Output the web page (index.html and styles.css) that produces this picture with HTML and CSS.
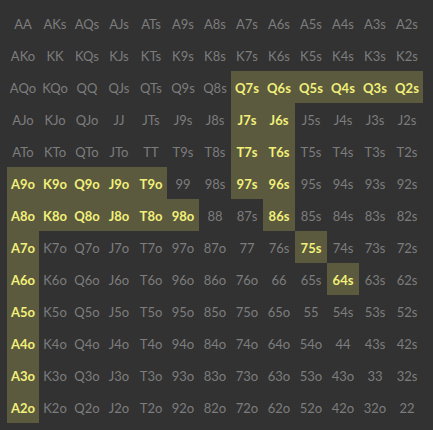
FILE: index.html
```html
<!DOCTYPE html>
<html>
<head>
<meta charset="utf-8">
<link rel="stylesheet" href="styles.css">
</head>
<body>
<div class="grid">
<div class="c">AA</div><div class="c">AKs</div><div class="c">AQs</div><div class="c">AJs</div><div class="c">ATs</div><div class="c">A9s</div><div class="c">A8s</div><div class="c">A7s</div><div class="c">A6s</div><div class="c">A5s</div><div class="c">A4s</div><div class="c">A3s</div><div class="c">A2s</div>
<div class="c">AKo</div><div class="c">KK</div><div class="c">KQs</div><div class="c">KJs</div><div class="c">KTs</div><div class="c">K9s</div><div class="c">K8s</div><div class="c">K7s</div><div class="c">K6s</div><div class="c">K5s</div><div class="c">K4s</div><div class="c">K3s</div><div class="c">K2s</div>
<div class="c">AQo</div><div class="c">KQo</div><div class="c">QQ</div><div class="c">QJs</div><div class="c">QTs</div><div class="c">Q9s</div><div class="c">Q8s</div><div class="c on">Q7s</div><div class="c on">Q6s</div><div class="c on">Q5s</div><div class="c on">Q4s</div><div class="c on">Q3s</div><div class="c on">Q2s</div>
<div class="c">AJo</div><div class="c">KJo</div><div class="c">QJo</div><div class="c">JJ</div><div class="c">JTs</div><div class="c">J9s</div><div class="c">J8s</div><div class="c on">J7s</div><div class="c on">J6s</div><div class="c">J5s</div><div class="c">J4s</div><div class="c">J3s</div><div class="c">J2s</div>
<div class="c">ATo</div><div class="c">KTo</div><div class="c">QTo</div><div class="c">JTo</div><div class="c">TT</div><div class="c">T9s</div><div class="c">T8s</div><div class="c on">T7s</div><div class="c on">T6s</div><div class="c">T5s</div><div class="c">T4s</div><div class="c">T3s</div><div class="c">T2s</div>
<div class="c on">A9o</div><div class="c on">K9o</div><div class="c on">Q9o</div><div class="c on">J9o</div><div class="c on">T9o</div><div class="c">99</div><div class="c">98s</div><div class="c on">97s</div><div class="c on">96s</div><div class="c">95s</div><div class="c">94s</div><div class="c">93s</div><div class="c">92s</div>
<div class="c on">A8o</div><div class="c on">K8o</div><div class="c on">Q8o</div><div class="c on">J8o</div><div class="c on">T8o</div><div class="c on">98o</div><div class="c">88</div><div class="c">87s</div><div class="c on">86s</div><div class="c">85s</div><div class="c">84s</div><div class="c">83s</div><div class="c">82s</div>
<div class="c on">A7o</div><div class="c">K7o</div><div class="c">Q7o</div><div class="c">J7o</div><div class="c">T7o</div><div class="c">97o</div><div class="c">87o</div><div class="c">77</div><div class="c">76s</div><div class="c on">75s</div><div class="c">74s</div><div class="c">73s</div><div class="c">72s</div>
<div class="c on">A6o</div><div class="c">K6o</div><div class="c">Q6o</div><div class="c">J6o</div><div class="c">T6o</div><div class="c">96o</div><div class="c">86o</div><div class="c">76o</div><div class="c">66</div><div class="c">65s</div><div class="c on">64s</div><div class="c">63s</div><div class="c">62s</div>
<div class="c on">A5o</div><div class="c">K5o</div><div class="c">Q5o</div><div class="c">J5o</div><div class="c">T5o</div><div class="c">95o</div><div class="c">85o</div><div class="c">75o</div><div class="c">65o</div><div class="c">55</div><div class="c">54s</div><div class="c">53s</div><div class="c">52s</div>
<div class="c on">A4o</div><div class="c">K4o</div><div class="c">Q4o</div><div class="c">J4o</div><div class="c">T4o</div><div class="c">94o</div><div class="c">84o</div><div class="c">74o</div><div class="c">64o</div><div class="c">54o</div><div class="c">44</div><div class="c">43s</div><div class="c">42s</div>
<div class="c on">A3o</div><div class="c">K3o</div><div class="c">Q3o</div><div class="c">J3o</div><div class="c">T3o</div><div class="c">93o</div><div class="c">83o</div><div class="c">73o</div><div class="c">63o</div><div class="c">53o</div><div class="c">43o</div><div class="c">33</div><div class="c">32s</div>
<div class="c on">A2o</div><div class="c">K2o</div><div class="c">Q2o</div><div class="c">J2o</div><div class="c">T2o</div><div class="c">92o</div><div class="c">82o</div><div class="c">72o</div><div class="c">62o</div><div class="c">52o</div><div class="c">42o</div><div class="c">32o</div><div class="c">22</div>
</div>
</body>
</html>
```
FILE: styles.css
```css
html, body {
  margin: 0;
  padding: 0;
  background: #323232;
}
body {
  padding: 7px;
  font-family: Lato, "Noto Sans", sans-serif;
  font-size: 13px;
}
.grid {
  display: grid;
  grid-template-columns: repeat(13, 32px);
  grid-auto-rows: 32px;
}
.c {
  display: flex;
  align-items: center;
  justify-content: center;
  padding-top: 2px;
  box-sizing: border-box;
  color: #7d7d7d;
  white-space: nowrap;
}
.c.on {
  background: #5b5a3e;
  color: #f2f07a;
  font-weight: bold;
}
```
